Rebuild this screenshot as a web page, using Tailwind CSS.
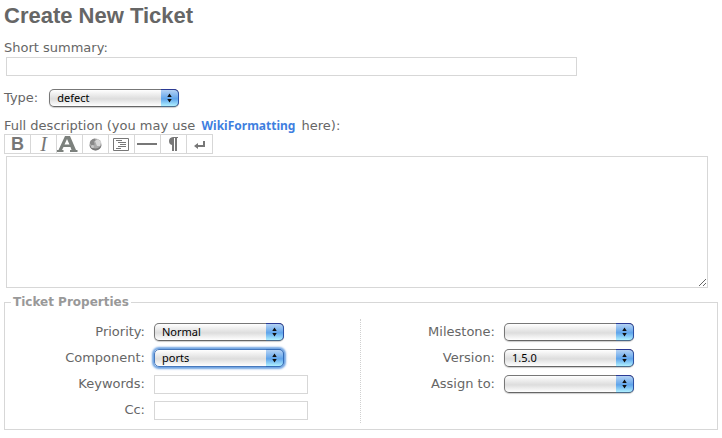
<!DOCTYPE html>
<html lang="en">
<head>
<meta charset="utf-8">
<meta name="viewport" content="width=device-width, initial-scale=1">
<title>Create New Ticket</title>
<script src="https://cdn.jsdelivr.net/npm/@tailwindcss/browser@4"></script>
</head>
<body class="bg-white p-1 font-['DejaVu_Sans',Verdana,sans-serif] text-[13px] leading-4 text-[#666]">
<svg class="hidden" aria-hidden="true">
  <symbol id="arrows" viewBox="0 0 18 18"><path d="M9 4l2.500 4h-5zM9 14l2.500-4h-5z" fill="#111"/></symbol>
</svg>
<form>
  <h1 class="font-['Liberation_Sans',Arial,sans-serif] text-[22px] leading-6 font-bold">Create New Ticket</h1>

  <div class="mt-3">
    <label for="summary" class="block">Short summary:</label>
    <input id="summary" type="text" class="mt-px ml-0.5 block h-[19px] w-[571px] max-w-full border border-[#d7d7d7] bg-white px-1 text-xs outline-none">
  </div>

  <div class="mt-[13px] flex items-center gap-[11px]">
    <label for="type">Type:</label>
    <div class="relative h-[18px] w-[130px]">
      <select id="type" class="block h-full w-full appearance-none rounded-[5px] border border-[#777] border-b-[#666] bg-linear-to-b from-[#fff] from-0% via-[#ddd] via-55% to-[#fff] px-[7px] font-['Noto_Sans',sans-serif] text-[11px] leading-4 text-black shadow-[0_1px_1px_#0003] outline-none"><option>defect</option></select>
      <svg class="pointer-events-none absolute inset-y-0 right-0 h-full w-[18px] rounded-r-[5px] border-t border-r border-b border-t-[#2b3a94] border-r-[#2c51a5] border-b-[#4b6c8c] bg-linear-to-b from-[#b4d2f4] via-[#5fa4ea] via-55% to-[#b0f0ff]" aria-hidden="true"><use href="#arrows"/></svg>
    </div>
  </div>

  <div class="mt-[11px]">
    <label for="description" class="block">Full description (you may use <a href="#" class="mx-0.5 font-['Noto_Sans',sans-serif] text-xs font-bold text-[#3f7fe0]">WikiFormatting</a> here):</label>
    <div class="flex">
      <div class="flex h-5 divide-x divide-[#d7d7d7] border border-[#d7d7d7] text-[#777]">
        <button type="button" aria-label="Bold" class="w-[26px] font-['Liberation_Sans',sans-serif] text-lg leading-[18px] font-bold">B</button>
        <button type="button" aria-label="Italic" class="w-[26px] font-['Liberation_Serif',serif] text-xl leading-[18px] italic">I</button>
        <button type="button" aria-label="Heading" class="w-[26px]"><svg class="h-[18px] w-[25px]" viewBox="0 0 25 18"><path fill="#7c817d" fill-rule="evenodd" d="M0 17v-2h1.500L8 1h5l6 14h1.500v2H13v-2h1.500l-1-3H6.500L5 15h1.500v2zM7.500 9.500h5L10 4z"/></svg></button>
        <button type="button" aria-label="Link" class="w-[26px]"><svg class="h-[18px] w-[25px]" viewBox="0 0 25 18"><circle cx="12.500" cy="9.500" r="6" fill="#aaa"/><path d="M6.700 8q1-4 5-4.500l1 2-2 1 1 3-3 1z" fill="#888"/><path d="M6.500 9.500a6 6 0 0 0 12 0q-2 4-6 4t-6-4" fill="#777"/><path d="M12 6l3-2 3 3-1 4-3 0z" fill="#d8d8d8"/><circle cx="9.500" cy="11.500" r="1.500" fill="#c8c8c8"/></svg></button>
        <button type="button" aria-label="Code block" class="w-[26px]"><svg class="h-[18px] w-[25px]" viewBox="0 0 25 18" fill="none" stroke="#777"><path d="M4.500 3.500h15v12h-15zM7 5.500h6M9 7.500h8M11 9.500h6M9 11.500h8M7 13.500h5"/></svg></button>
        <button type="button" aria-label="Horizontal rule" class="w-[26px]"><svg class="h-[18px] w-[25px]" viewBox="0 0 25 18"><path d="M2 8h20v2H2z" fill="#777"/></svg></button>
        <button type="button" aria-label="Paragraph" class="w-[26px]"><svg class="h-[18px] w-[25px]" viewBox="0 0 25 18"><path d="M17 2v1h-1v13h-2V3h-1v13h-2v-6q-3-.5-3-4t4-4z" fill="#777"/></svg></button>
        <button type="button" aria-label="Line break" class="w-[25px]"><svg class="h-[18px] w-[25px]" viewBox="0 0 25 18"><path d="M16 6h2v6h-7v2l-4-3 4-3v2h5z" fill="#777"/></svg></button>
      </div>
    </div>
    <div class="mt-0.5 pr-2.5 pl-0.5">
      <textarea id="description" class="block h-[132px] w-full border border-[#d7d7d7] bg-white p-1 text-xs outline-none"></textarea>
    </div>
  </div>

  <fieldset class="mt-1.5 border border-[#d7d7d7] pb-1.5">
    <legend class="ml-1.5 px-0.5 text-xs leading-4 font-bold text-[#999]">Ticket Properties</legend>
    <div class="mt-[9px] grid grid-cols-2">
      <div class="grid auto-rows-[26px] grid-cols-[140px_1fr] items-center gap-x-[9px] border-r border-dotted border-[#d0d0d0]">
        <label for="priority" class="text-right">Priority:</label>
        <div class="relative h-[18px] w-[130px]">
          <select id="priority" class="block h-full w-full appearance-none rounded-[5px] border border-[#777] border-b-[#666] bg-linear-to-b from-[#fff] from-0% via-[#ddd] via-55% to-[#fff] px-[7px] font-['Noto_Sans',sans-serif] text-[11px] leading-4 text-black shadow-[0_1px_1px_#0003] outline-none"><option>Normal</option></select>
          <svg class="pointer-events-none absolute inset-y-0 right-0 h-full w-[18px] rounded-r-[5px] border-t border-r border-b border-t-[#2b3a94] border-r-[#2c51a5] border-b-[#4b6c8c] bg-linear-to-b from-[#b4d2f4] via-[#5fa4ea] via-55% to-[#b0f0ff]" aria-hidden="true"><use href="#arrows"/></svg>
        </div>
        <label for="component" class="text-right">Component:</label>
        <div class="relative h-[18px] w-[130px]">
          <select id="component" class="block h-full w-full appearance-none rounded-[5px] border border-[#4779bd] bg-linear-to-b from-[#fff] from-0% via-[#ddd] via-55% to-[#fff] px-[7px] font-['Noto_Sans',sans-serif] text-[11px] leading-4 text-black shadow-[0_0_2px_2px_#6ea3e2] outline-none"><option>ports</option></select>
          <svg class="pointer-events-none absolute inset-y-0 right-0 h-full w-[18px] rounded-r-[5px] border-t border-r border-b border-[#356db8] bg-linear-to-b from-[#b4d2f4] via-[#5fa4ea] via-55% to-[#b0f0ff]" aria-hidden="true"><use href="#arrows"/></svg>
        </div>
        <label for="keywords" class="text-right">Keywords:</label>
        <input id="keywords" type="text" class="h-[19px] w-[154px] border border-[#d7d7d7] bg-white px-1 text-xs outline-none">
        <label for="cc" class="text-right">Cc:</label>
        <input id="cc" type="text" class="h-[19px] w-[154px] border border-[#d7d7d7] bg-white px-1 text-xs outline-none">
      </div>
      <div class="grid auto-rows-[26px] grid-cols-[134px_1fr] content-start items-center gap-x-[9px]">
        <label for="milestone" class="text-right">Milestone:</label>
        <div class="relative h-[18px] w-[130px]">
          <select id="milestone" class="block h-full w-full appearance-none rounded-[5px] border border-[#777] border-b-[#666] bg-linear-to-b from-[#fff] from-0% via-[#ddd] via-55% to-[#fff] px-[7px] font-['Noto_Sans',sans-serif] text-[11px] leading-4 text-black shadow-[0_1px_1px_#0003] outline-none"><option></option></select>
          <svg class="pointer-events-none absolute inset-y-0 right-0 h-full w-[18px] rounded-r-[5px] border-t border-r border-b border-t-[#2b3a94] border-r-[#2c51a5] border-b-[#4b6c8c] bg-linear-to-b from-[#b4d2f4] via-[#5fa4ea] via-55% to-[#b0f0ff]" aria-hidden="true"><use href="#arrows"/></svg>
        </div>
        <label for="version" class="text-right">Version:</label>
        <div class="relative h-[18px] w-[130px]">
          <select id="version" class="block h-full w-full appearance-none rounded-[5px] border border-[#777] border-b-[#666] bg-linear-to-b from-[#fff] from-0% via-[#ddd] via-55% to-[#fff] px-[7px] font-['Noto_Sans',sans-serif] text-[11px] leading-4 text-black shadow-[0_1px_1px_#0003] outline-none"><option>1.5.0</option></select>
          <svg class="pointer-events-none absolute inset-y-0 right-0 h-full w-[18px] rounded-r-[5px] border-t border-r border-b border-t-[#2b3a94] border-r-[#2c51a5] border-b-[#4b6c8c] bg-linear-to-b from-[#b4d2f4] via-[#5fa4ea] via-55% to-[#b0f0ff]" aria-hidden="true"><use href="#arrows"/></svg>
        </div>
        <label for="owner" class="text-right">Assign to:</label>
        <div class="relative h-[18px] w-[130px]">
          <select id="owner" class="block h-full w-full appearance-none rounded-[5px] border border-[#777] border-b-[#666] bg-linear-to-b from-[#fff] from-0% via-[#ddd] via-55% to-[#fff] px-[7px] font-['Noto_Sans',sans-serif] text-[11px] leading-4 text-black shadow-[0_1px_1px_#0003] outline-none"><option></option></select>
          <svg class="pointer-events-none absolute inset-y-0 right-0 h-full w-[18px] rounded-r-[5px] border-t border-r border-b border-t-[#2b3a94] border-r-[#2c51a5] border-b-[#4b6c8c] bg-linear-to-b from-[#b4d2f4] via-[#5fa4ea] via-55% to-[#b0f0ff]" aria-hidden="true"><use href="#arrows"/></svg>
        </div>
      </div>
    </div>
  </fieldset>
</form>
</body>
</html>
